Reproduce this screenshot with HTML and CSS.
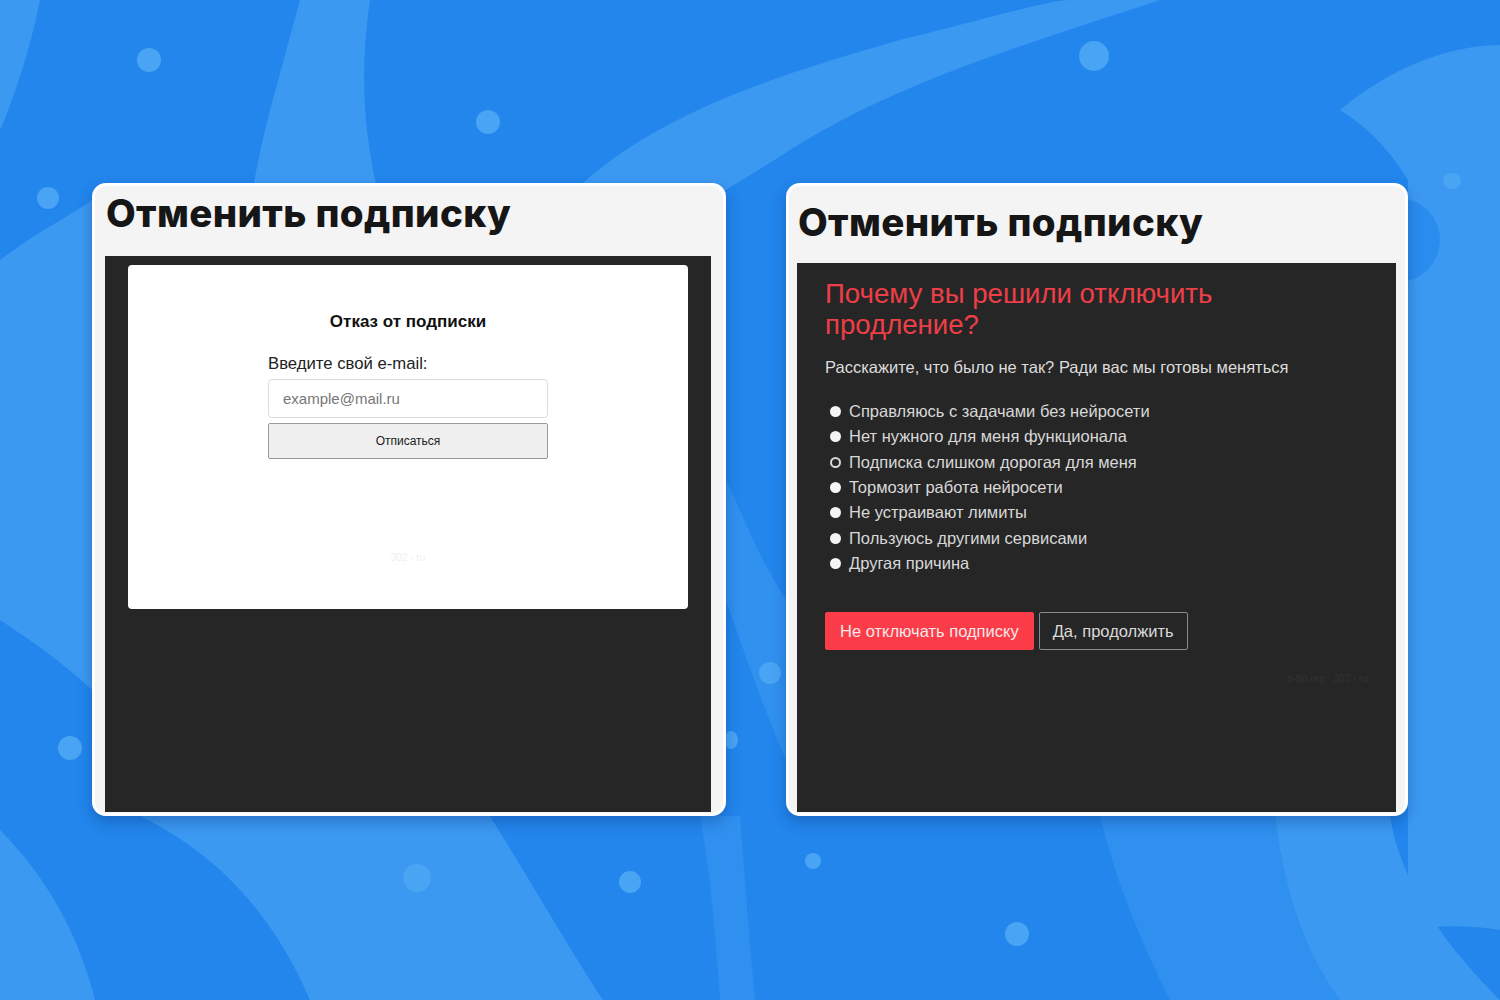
FILE: index.html
```html
<!DOCTYPE html>
<html lang="ru">
<head>
<meta charset="utf-8">
<title>Отменить подписку</title>
<link rel="stylesheet" href="styles.css">
</head>
<body>
<div class="stage">
  <svg class="bg" width="1500" height="1000" viewBox="0 0 1500 1000" aria-hidden="true">
    <rect width="1500" height="1000" fill="#2286ec"/>
    <g fill="#3c99f2">
      <path d="M0 0 H40 C30 50 15 95 0 130 Z"/>
      <path d="M300 0 H370 C358 80 365 150 385 220 C420 330 520 390 560 470 L560 560 C470 470 330 420 255 300 C240 250 250 190 270 110 Z"/>
      <path d="M560 205 C640 120 760 80 900 40 C980 20 1050 0 1070 0 H1160 C1040 40 900 80 790 150 C720 195 680 215 650 240 Z"/>
      <path d="M1340 110 C1400 60 1460 45 1500 45 V930 C1470 925 1440 925 1408 930 V180 C1390 150 1365 125 1340 110 Z"/>
      <path d="M0 260 C40 230 80 210 92 200 V690 C60 660 30 640 0 620 Z"/>
      <path d="M0 830 C50 880 80 940 95 1000 H0 Z"/>
      <path d="M140 816 H490 C530 880 570 950 603 1000 H310 C280 930 230 860 140 816 Z"/>
      <path d="M700 816 H740 C745 880 750 950 755 1000 H720 C715 930 710 870 700 816 Z" opacity="0.5"/>
      <path d="M1100 816 H1275 C1285 900 1310 960 1340 1000 H1170 C1140 940 1115 880 1100 816 Z" opacity="0.5"/>
      <path d="M1275 816 H1390 C1400 880 1440 940 1500 1000 H1340 C1310 960 1285 900 1275 816 Z"/>
      <path d="M726 480 C745 520 760 560 786 600 V760 C760 700 740 640 726 600 Z" opacity="0.6"/>
    </g>
    <g fill="#2a8cee">
      <circle cx="1398" cy="240" r="42"/>
    </g>
    <g fill="#4aa4f4">
      <ellipse cx="149" cy="60" rx="12" ry="12"/>
      <ellipse cx="488" cy="122" rx="12" ry="12"/>
      <ellipse cx="1094" cy="56" rx="15" ry="15"/>
      <ellipse cx="48" cy="198" rx="11" ry="11"/>
      <ellipse cx="1452" cy="181" rx="9" ry="8"/>
      <ellipse cx="70" cy="748" rx="12" ry="12"/>
      <ellipse cx="770" cy="673" rx="11" ry="11"/>
      <ellipse cx="731" cy="740" rx="7" ry="9"/>
      <ellipse cx="417" cy="878" rx="14" ry="14"/>
      <ellipse cx="630" cy="882" rx="11" ry="11"/>
      <ellipse cx="813" cy="861" rx="8" ry="8"/>
      <ellipse cx="1017" cy="934" rx="12" ry="12"/>
    </g>
  </svg>

  <main class="cards">
    <section class="card card-left">
      <h1 class="card-title title-left">Отменить подписку</h1>
      <div class="panel panel-left">
        <div class="sheet">
          <h2 class="sheet-title">Отказ от подписки</h2>
          <form class="form">
            <label class="form-label">Введите свой e-mail:</label>
            <input class="form-input" type="text" placeholder="example@mail.ru">
            <button class="form-btn" type="button">Отписаться</button>
          </form>
          <div class="sheet-foot">302 - ru</div>
        </div>
      </div>
    </section>

    <section class="card card-right">
      <h1 class="card-title title-right">Отменить подписку</h1>
      <div class="panel panel-right">
        <h2 class="why">Почему вы решили отключить<br>продление?</h2>
        <p class="why-sub">Расскажите, что было не так? Ради вас мы готовы меняться</p>
        <ul class="reasons">
          <li class="reason"><span class="radio"></span>Справляюсь с задачами без нейросети</li>
          <li class="reason"><span class="radio"></span>Нет нужного для меня функционала</li>
          <li class="reason"><span class="radio radio-ring"></span>Подписка слишком дорогая для меня</li>
          <li class="reason"><span class="radio"></span>Тормозит работа нейросети</li>
          <li class="reason"><span class="radio"></span>Не устраивают лимиты</li>
          <li class="reason"><span class="radio"></span>Пользуюсь другими сервисами</li>
          <li class="reason"><span class="radio"></span>Другая причина</li>
        </ul>
        <div class="actions">
          <button class="btn btn-red" type="button">Не отключать подписку</button>
          <button class="btn btn-ghost" type="button">Да, продолжить</button>
        </div>
        <div class="panel-foot">a-bo.org · 302 - ru</div>
      </div>
    </section>
  </main>
</div>
</body>
</html>
```

FILE: styles.css
```css
* { box-sizing: border-box; }
html, body { margin: 0; padding: 0; }
body {
  width: 1500px;
  height: 1000px;
  overflow: hidden;
  font-family: "Liberation Sans", Arial, sans-serif;
  background: #2286ec;
}
.stage {
  position: relative;
  width: 1500px;
  height: 1000px;
}
.bg {
  position: absolute;
  left: 0;
  top: 0;
  display: block;
}
.cards {
  position: relative;
  display: flex;
  align-items: flex-start;
  gap: 60px;
  padding: 183px 0 0 92px;
}
.card {
  height: 633px;
  background: #f4f4f4;
  border: 3px solid #ffffff;
  border-radius: 14px;
  display: flex;
  flex-direction: column;
  box-shadow: 0 6px 14px rgba(10, 50, 120, 0.35);
  overflow: hidden;
}
.card-left { width: 634px; }
.card-right { width: 622px; }

.card-title {
  margin: 0;
  font-family: Inter, "Noto Sans", sans-serif;
  font-weight: 800;
  font-size: 38.5px;
  line-height: 1;
  color: #161616;
  letter-spacing: 0.35px;
}
.title-left { height: 70px; padding: 8px 0 0 11px; }
.title-right { height: 77px; padding: 17px 0 0 9px; }

.panel {
  flex: 1;
  background: #262626;
  margin-bottom: 1px;
}
.panel-left { margin-left: 10px; margin-right: 12px; padding: 9px 23px 0; }
.panel-right { margin-left: 8px; margin-right: 9px; padding: 15px 28px 0; }

/* left sheet */
.sheet {
  height: 344px;
  background: #ffffff;
  border-radius: 4px;
  display: flex;
  flex-direction: column;
  align-items: center;
  padding-top: 46px;
}
.sheet-title {
  margin: 0;
  font-size: 17px;
  font-weight: 700;
  line-height: 21px;
  color: #111;
}
.form {
  width: 280px;
  display: flex;
  flex-direction: column;
  margin-top: 22px;
}
.form-label {
  font-size: 16.7px;
  line-height: 20px;
  color: #222;
  margin-bottom: 5px;
}
.form-input {
  height: 39px;
  border: 1px solid #dcdcdc;
  border-radius: 4px;
  padding: 0 14px;
  font-family: "Liberation Sans", Arial, sans-serif;
  font-size: 15px;
  color: #333;
  background: #fff;
}
.form-input::placeholder { color: #777; }
.form-btn {
  margin-top: 5px;
  height: 36px;
  border: 1px solid #9a9a9a;
  border-radius: 2px;
  background: #efefef;
  font-family: "Liberation Sans", Arial, sans-serif;
  font-size: 12px;
  color: #222;
}
.sheet-foot {
  margin-top: 93px;
  font-size: 10px;
  color: #efefef;
}

/* right panel */
.why {
  margin: 0;
  font-weight: 400;
  font-size: 27.6px;
  line-height: 31px;
  color: #ee3e48;
}
.why-sub {
  margin: 17px 0 0;
  font-size: 16.5px;
  line-height: 20px;
  color: #dcdcdc;
}
.reasons {
  list-style: none;
  margin: 22px 0 0;
  padding: 0;
}
.reason {
  display: flex;
  align-items: center;
  height: 25.33px;
  font-size: 16.5px;
  color: #d8d8d8;
}
.radio {
  width: 11px;
  height: 11px;
  border-radius: 50%;
  background: #f4f4f4;
  margin: 0 8px 0 5px;
  flex: none;
}
.radio-ring {
  background: #262626;
  border: 2.5px solid #d8d8d8;
}
.actions {
  display: flex;
  gap: 5px;
  margin-top: 36px;
}
.btn {
  height: 38px;
  padding: 0 14px;
  font-family: "Liberation Sans", Arial, sans-serif;
  font-size: 16.5px;
  border-radius: 2px;
}
.btn-red {
  background: #fc3c49;
  border: 1px solid #fc3c49;
  color: #f3e9ea;
}
.btn-ghost {
  background: #262626;
  border: 1px solid #8a8a8a;
  color: #dadada;
  padding: 0 13px;
}
.panel-foot {
  margin-top: 23px;
  text-align: right;
  font-size: 10px;
  color: #333333;
}
```
